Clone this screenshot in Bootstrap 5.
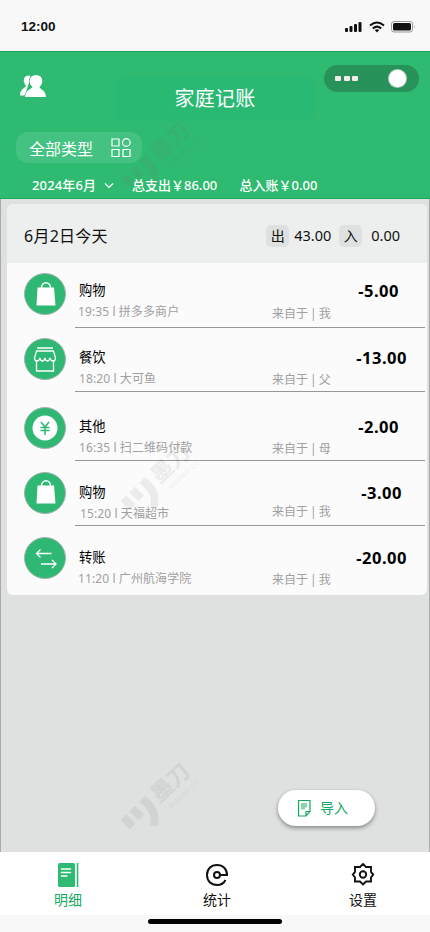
<!DOCTYPE html>
<html lang="zh-CN">
<head>
<meta charset="utf-8">
<meta name="viewport" content="width=device-width, initial-scale=1">
<title>家庭记账</title>
<link href="https://cdn.jsdelivr.net/npm/bootstrap@5.3.0/dist/css/bootstrap.min.css" rel="stylesheet">
<style>
body{font-family:"Noto Sans","Noto Sans CJK SC",sans-serif;background:#f8f8f8;color:#111}
.screen{width:430px;height:932px;overflow:hidden}
.screen svg{display:block;flex:none}
.status{height:51px;padding:3px 14px 0 21px;font:bold 13.5px/1 "Liberation Sans",sans-serif;color:#111}
.head{height:148px;background:#2eba70;border-top:1px solid #16a75b;border-bottom:1px solid #12ae5e;color:#fff}
.head-top{height:68px;padding:13px 11px 0 20px}
.title-box{width:200px;height:46px;border-radius:10px;background:#2ab973;font-size:20px;line-height:48px;margin:10px 0 0 68px;letter-spacing:.3px}
.capsule{width:95px;height:27px;border-radius:14px;background:#27925a;padding:0 13px 0 11px}
.dots{gap:2.5px}
.dots i{width:6px;height:5px;background:#f3e9ee;border-radius:1px}
.knob{width:17px;height:17px;border-radius:50%;background:#fff;box-shadow:0 0 0 1px #b9cfc2}
.type-pill{width:126px;height:31px;border-radius:12px;background:#44c281;margin:12px 0 0 16px;padding:0 11px 0 13px;font-size:16px;line-height:31px}
.type-pill span{padding-top:4px}
.totals{margin-top:11px;padding-left:32px;font-size:13px;line-height:22px;font-weight:500;height:22px}
.month{width:100px;letter-spacing:.15px}.spent{width:107.5px}
.main-area{height:653px;background:#dfe1e0;border:solid #a9abaa;border-width:0 1px;padding:5px 2px 0 6px}
.ledger{height:391px;background:#fbfbfb;border-radius:6px}
.day{height:59px;background:#edefee;padding:4px 27px 0 17px}
.day-name{font-size:16px;letter-spacing:.25px}
.tag{width:23px;height:22px;background:#dfe1e0;border-radius:5px;font-size:14px;line-height:22px}
.num{font-size:14.5px}
.num-out{margin:0 8px 0 5px}
.num-in{margin-left:9px}
.entry{padding:var(--ip) 2px 0 17px}
.disc{width:42px;height:42px;border-radius:50%;background:#2eb873;border:1px solid #a3b3aa;flex:none}
.info{width:350px;margin-left:9px;border-bottom:1px solid #979797;height:var(--h);margin-top:calc(0px - var(--ip));padding-top:var(--tp)}
.entry:last-child .info{border:0}
.line-a{height:22px;padding:0 var(--r) 0 4px;line-height:22px;font-size:13.3px;color:#000}
.amt{font-size:16.5px;font-weight:700;line-height:23px;letter-spacing:.5px}
.line-b{height:21px;line-height:21px;font-size:12px;color:#a0a0a0}
.what{padding-left:var(--x);width:197px;white-space:nowrap;letter-spacing:.1px}
.from{padding-top:var(--f);word-spacing:-1px}
.e1{--h:65px;--ip:10px;--tp:16px;--r:26px;--x:3px;--f:2px}
.e2{--h:64px;--ip:10px;--tp:18px;--r:18px;--x:4px;--f:1px}
.e3{--h:69px;--ip:15px;--tp:23px;--r:26px;--x:4px;--f:1px}
.e4{--h:65px;--ip:11px;--tp:20px;--r:23px;--x:5px;--f:0px}
.e4 .from{line-height:18px}
.e5{--h:69px;--ip:11px;--tp:20px;--r:18px;--x:3px;--f:1px}
.import{width:97px;height:36px;border:0;border-radius:18px;background:#fff;box-shadow:0 2px 4px rgba(0,0,0,.4);color:#14a860;font-size:14px;line-height:36px;margin:195px 0 0 271px;padding:0 0 0 19px}
.tabs{height:63px;background:#fff;padding:0 37px 0 38px}
.tab{width:60px;font-size:14px;line-height:20px;color:#111;text-decoration:none;padding-top:10px}
.tab span{padding-top:1px}
.tab.on{color:#14a860}
.tab-mid{padding-left:3px}
.homebar{width:134px;height:5px;border-radius:3px;background:#000;margin-top:4px}
.wm{position:absolute;left:115px;pointer-events:none;fill:#000;opacity:.06}
.wm text{font-size:22px;font-weight:700}
.wm .wm-url{font:6.5px "Liberation Sans",sans-serif}
.wm-1{top:121px;fill:#777;opacity:.13}.wm-2{top:443px}.wm-3{top:762px}
</style>
<script src="https://cdn.jsdelivr.net/npm/bootstrap@5.3.0/dist/js/bootstrap.bundle.min.js"></script>
</head>
<body>
<svg width="0" height="0" class="position-absolute">
 <symbol id="bag" viewBox="0 0 42 42"><path d="M13.500 14.500h16.500l1.500 18H12.500z" fill="#fff"/><path d="M17.500 15c0-7 9-7 9 0" fill="none" stroke="#fff" stroke-width="1.500"/></symbol>
 <symbol id="bars" viewBox="0 0 100 80"><path d="M5.700 58.300l5.300-6 9.300 9-5.300 6zM14.300 49.700l5.400-6 9.300 8.600-5.300 6zM24.300 39.700L30 34c11 8 16 18 12.300 30.500L35 63c3-9-2-16-10.700-23.300z"/></symbol>
</svg>
<div class="screen position-relative d-flex flex-column">
 <div class="status d-flex align-items-center">
  <span>12:00</span>
  <svg class="ms-auto" width="72" height="14" viewBox="0 0 72 14"><g fill="#111"><rect x="1" y="8" width="3" height="4" rx="1"/><rect x="5.500" y="6" width="3" height="6" rx="1"/><rect x="10" y="4" width="3" height="8" rx="1"/><rect x="14.500" y="2" width="3" height="10" rx="1"/></g><g fill="none" stroke="#111" stroke-width="2"><path d="M26 5.500q7-6 14 0M28.800 8.500q4.200-3.800 8.400 0"/></g><path d="M33 12.500l-2.300-2.400q2.300-1.800 4.600 0z" fill="#111"/><rect x="47.500" y="1.500" width="21" height="10.500" rx="2.500" fill="none" stroke="#999"/><rect x="49" y="3" width="18" height="7.500" rx="1.500" fill="#111"/><path d="M70 5v3.500q1.500-1.700 0-3.500z" fill="#999"/></svg>
 </div>
 <header class="head">
  <div class="head-top d-flex align-items-start">
   <svg class="mt-2" width="27" height="26" viewBox="0 0 27 26"><path d="M11 3C6 1 3 5 4 9c.5 2 1.500 3 2 4C5 15 0 16 0 22.500h5z" fill="#fff"/><path d="M16 2c8 0 7.500 9 3.500 12 0 2 6.500 3 6.500 10H5c0-7 6.500-8 7.500-10C8 11 8.500 2 16 2z" fill="#fff" stroke="#2eba70" stroke-width="1.400" paint-order="stroke"/></svg>
   <div class="title-box text-center">家庭记账</div>
   <div class="capsule ms-auto d-flex align-items-center justify-content-between"><span class="dots d-flex"><i></i><i></i><i></i></span><span class="knob"></span></div>
  </div>
  <div class="type-pill d-flex align-items-center justify-content-between"><span>全部类型</span>
   <svg width="20" height="20" viewBox="0 0 20 20" fill="none" stroke="#fff" stroke-width="1.200"><path d="M1 1h7v7H1zM1 11.500h7v7H1zM12 11.500h7v7h-7z"/><circle cx="15.300" cy="4.500" r="3.800"/></svg>
  </div>
  <div class="totals d-flex"><span class="month d-flex align-items-center">2024年6月<svg class="ms-2" width="10" height="7" viewBox="0 0 10 7"><path d="M1 1.500l4 4 4-4" fill="none" stroke="#fff" stroke-width="1.200"/></svg></span><span class="spent">总支出￥86.00</span><span>总入账￥0.00</span></div>
 </header>
 <main class="main-area">
  <section class="ledger overflow-hidden">
   <div class="day d-flex align-items-center"><span class="day-name me-auto">6月2日今天</span><span class="tag text-center">出</span><span class="num num-out">43.00</span><span class="tag text-center">入</span><span class="num num-in">0.00</span></div>
   <div class="entry e1 d-flex align-items-start"><div class="disc"><svg width="40" height="40" viewBox="1 1 40 40"><use href="#bag" width="42" height="42"/></svg></div>
    <div class="info"><div class="line-a d-flex justify-content-between"><span>购物</span><span class="amt">-5.00</span></div><div class="line-b d-flex"><span class="what">19:35 l 拼多多商户</span><span class="from">来自于 | 我</span></div></div></div>
   <div class="entry e2 d-flex align-items-start"><div class="disc"><svg width="40" height="40" viewBox="1 1 40 40" fill="none" stroke="#fff" stroke-width="1.300"><path d="M13 10h16M12.500 13h17l2 7c0 4-4.500 4-5.500 0-1 4-4.500 4-5 0-1 4-4.500 4-5 0-1 4-5.500 4-5.500 0zM12.500 23v10h17V23"/></svg></div>
    <div class="info"><div class="line-a d-flex justify-content-between"><span>餐饮</span><span class="amt">-13.00</span></div><div class="line-b d-flex"><span class="what">18:20 l 大可鱼</span><span class="from">来自于 | 父</span></div></div></div>
   <div class="entry e3 d-flex align-items-start"><div class="disc"><svg width="40" height="40" viewBox="1 1 40 40"><circle cx="21" cy="21" r="12.500" fill="#fff"/><path d="M17 15l4 5 4-5M16.500 20.500h9M16.500 23.500h9M21 20v8" fill="none" stroke="#2eb873" stroke-width="1.500"/></svg></div>
    <div class="info"><div class="line-a d-flex justify-content-between"><span>其他</span><span class="amt">-2.00</span></div><div class="line-b d-flex"><span class="what">16:35 l 扫二维码付款</span><span class="from">来自于 | 母</span></div></div></div>
   <div class="entry e4 d-flex align-items-start"><div class="disc"><svg width="40" height="40" viewBox="1 1 40 40"><use href="#bag" width="42" height="42" y="-1"/></svg></div>
    <div class="info"><div class="line-a d-flex justify-content-between"><span>购物</span><span class="amt">-3.00</span></div><div class="line-b d-flex"><span class="what">15:20 l 天福超市</span><span class="from">来自于 | 我</span></div></div></div>
   <div class="entry e5 d-flex align-items-start"><div class="disc"><svg width="40" height="40" viewBox="1 1 40 40" fill="none" stroke="#fff" stroke-width="1.300"><path d="M27.500 16.500h-15m4-4l-4 4 4 4M17 27h15m-4-4l4 4-4 4"/></svg></div>
    <div class="info"><div class="line-a d-flex justify-content-between"><span>转账</span><span class="amt">-20.00</span></div><div class="line-b d-flex"><span class="what">11:20 l 广州航海学院</span><span class="from">来自于 | 我</span></div></div></div>
  </section>
  <button class="import d-flex align-items-center" type="button"><svg class="me-2" width="15" height="20" viewBox="0 0 15 20"><path d="M1.500 2.500h11.500v11l-4 4.500H1.500zM13 13.500H9V18" fill="none" stroke="#14a860" stroke-width="1.200"/><path d="M4 5h6v4.500H8v2H4z" fill="#8bd5ae"/></svg><span>导入</span></button>
 </main>
 <nav class="tabs d-flex justify-content-between">
  <a class="tab on d-flex flex-column align-items-center" href="#"><svg width="24" height="27" viewBox="0 0 24 27"><rect x="2" y="1" width="17" height="24" rx="1.500" fill="#2eba73"/><path d="M21.500 1v24" stroke="#2eba73" stroke-width="1.600"/><path d="M5.500 7h9M5.500 10.500h9M5.500 14h5.500" stroke="#fff" stroke-width="1.500" stroke-linecap="round"/></svg><span>明细</span></a>
  <a class="tab tab-mid d-flex flex-column align-items-center" href="#"><svg width="24" height="27" viewBox="0 0 24 27" fill="none" stroke="#111" stroke-width="2"><path d="M15 13h7C22 7 18 3 12 3S2 7 2 13s4 10 10 10c4 0 7-2 8.500-5"/><circle cx="12" cy="13" r="3"/></svg><span>统计</span></a>
  <a class="tab d-flex flex-column align-items-center" href="#"><svg width="24" height="27" viewBox="0 0 24 27" fill="none" stroke="#111" stroke-width="1.900"><path d="M12 2l3 3h5v5l2.200 2.500L20 15.500v4h-5l-3 3-3-3H4v-4l-2.200-3L4 10V5h5z"/><circle cx="12" cy="12.500" r="3.200"/></svg><span>设置</span></a>
 </nav>
 <div class="homebar mx-auto"></div>
 <svg class="wm wm-1" width="100" height="80"><use href="#bars" width="100" height="80"/><text transform="translate(47 28) rotate(-43)" x="-11" y="8">墨刀</text><text class="wm-url" transform="translate(56 47) rotate(-43)" textLength="40">MODAO.CC</text></svg>
 <svg class="wm wm-2" width="100" height="80"><use href="#bars" width="100" height="80"/><text transform="translate(47 28) rotate(-43)" x="-11" y="8">墨刀</text><text class="wm-url" transform="translate(56 47) rotate(-43)" textLength="40">MODAO.CC</text></svg>
 <svg class="wm wm-3" width="100" height="80"><use href="#bars" width="100" height="80"/><text transform="translate(47 28) rotate(-43)" x="-11" y="8">墨刀</text><text class="wm-url" transform="translate(56 47) rotate(-43)" textLength="40">MODAO.CC</text></svg>
</div>
</body>
</html>
